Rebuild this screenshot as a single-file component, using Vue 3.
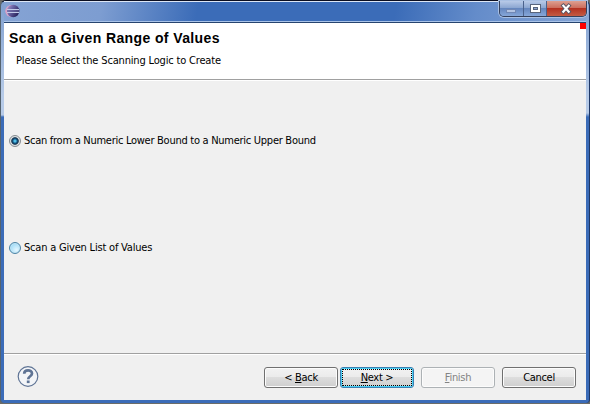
<script setup>
import { ref } from 'vue'

const options = ['Scan from a Numeric Lower Bound to a Numeric Upper Bound', 'Scan a Given List of Values']
const selected = ref(0)
const buttons = [
  { before: '< ', key: 'B', after: 'ack', kind: 'back' },
  { before: '', key: 'N', after: 'ext >', kind: 'next' },
  { before: '', key: 'F', after: 'inish', kind: 'finish', disabled: true },
  { before: 'Cancel', key: '', after: '', kind: 'cancel' },
]
</script>

<template>
  <div class="window">
    <div class="titlebar">
      <svg class="logo" width="15" height="14" viewBox="0 0 15 14">
        <defs>
          <linearGradient id="orb" x1="0" y1="0" x2="1" y2=".6">
            <stop offset="0" stop-color="#b9a0d2" />
            <stop offset=".4" stop-color="#6e67a8" />
            <stop offset="1" stop-color="#28235c" />
          </linearGradient>
        </defs>
        <ellipse cx="6.5" cy="7" rx="6.3" ry="6" fill="#d9a3c8" />
        <circle cx="8.2" cy="7" r="6.2" fill="url(#orb)" />
        <path d="M2 5.5h12M2 8.5h12" stroke="#c2cbe8" />
        <path d="M2 7h12" stroke="#6a6aa2" />
      </svg>
      <div class="controls">
        <span class="min"><svg width="23" height="15"><rect x="6.5" y="8.5" width="9" height="3" fill="#b3c4e2" stroke="#7188b5" /></svg></span>
        <span class="max"><svg width="22" height="15"><rect x="6.5" y="3.5" width="10" height="8" fill="#fff" stroke="#59657c" /><rect x="9.5" y="6.5" width="4" height="2" fill="#8ba4cf" stroke="#59657c" /></svg></span>
        <span class="close"><svg width="39" height="15"><path d="M16.3 4.7l5.4 6M21.7 4.7l-5.4 6" stroke="#5c5866" stroke-width="4" stroke-linecap="square" /><path d="M16.3 4.7l5.4 6M21.7 4.7l-5.4 6" stroke="#fff" stroke-width="2.1" stroke-linecap="square" /></svg></span>
      </div>
    </div>
    <div class="content">
      <header>
        <h1>Scan a Given Range of Values</h1>
        <p>Please Select the Scanning Logic to Create</p>
        <i class="marker"></i>
      </header>
      <main>
        <div v-for="(option, i) in options" :key="option" class="option" @click="selected = i">
          <span class="radio" :class="{ checked: selected === i }"></span>
          <span class="label" :class="'label-' + i">{{ option }}</span>
        </div>
      </main>
      <footer>
        <svg class="help" width="22" height="22" viewBox="0 0 22 22">
          <circle cx="11" cy="10.5" r="9.8" fill="#f3f5f8" stroke="#5f7495" stroke-width="1.2" />
          <path d="M7.2 7.8C7.2 3.3 15 3.3 15 7.6C15 10.4 11.2 10.1 11.2 13.2" fill="none" stroke="#5f7495" stroke-width="2.7" />
          <rect x="9.8" y="14.5" width="2.8" height="2.6" fill="#5f7495" />
        </svg>
        <div class="buttons">
          <button v-for="b in buttons" :key="b.kind" :class="b.kind" :disabled="b.disabled"><span class="text">{{ b.before }}<u>{{ b.key }}</u>{{ b.after }}</span></button>
        </div>
      </footer>
    </div>
  </div>
</template>

<style>
body { margin: 0; background: #6c6c68; overflow: hidden; }
</style>

<style scoped>
.window {
  box-sizing: border-box; width: 590px; height: 403px; padding: 0 3px 3px 3px;
  display: flex; flex-direction: column; border-top: 1px solid #0b0e20;
  border-left: 1px solid #55636f; border-right: 1px solid #1f3866;
  border-radius: 6px 6px 4px 4px;
  background:
    linear-gradient(#7f9fd0, #b7cbe8 94px, #b7cbe8 114px, transparent 116px) left / 3px 100% no-repeat,
    linear-gradient(#7f9fd0, #b7cbe8 94px, #b7cbe8 112px, transparent 116px) right / 3px 100% no-repeat,
    linear-gradient(100deg, #85a3d4, #7d9dd1 100px, #3b6cb8 195px, #3b6cb8 390px, #648cca 470px, #86a5d5) top / 100% 22px no-repeat,
    #3b6cb8;
  font: 11px/14px "DejaVu Sans Condensed", "DejaVu Sans", sans-serif; font-stretch: condensed; color: #000;
}
.titlebar {
  height: 21px; flex: none; box-sizing: border-box; display: flex; justify-content: space-between;
  border-top: 1px solid #dce6f5; border-bottom: 1px solid #a9c3e8;
}
.logo { margin: 2px 0 0 1px; }
.controls {
  display: flex; height: 15px; margin-right: -1px; margin-top: -1px; border: 1px solid #35415c; border-top: 0;
  border-radius: 0 0 5px 5px; overflow: hidden; box-shadow: 0 0 0 1px #a9c0e3;
}
.controls span { height: 15px; }
.controls svg { display: block; }
.min, .max { background: linear-gradient(#b8cae8, #8aa5d0 47%, #6687be 50%, #86a7d9); border-right: 1px solid #4b628c; }
.close { background: linear-gradient(#dda091, #cc6c5b 47%, #b43221 50%, #c45c43); }
.content {
  flex: 1; display: flex; flex-direction: column; background: #f0f0f0; box-sizing: border-box;
}
header {
  position: relative; height: 58px; box-sizing: border-box; flex: none; padding: 7px 5px 0;
  background: #fff; border-top: 1px solid #26446f; border-bottom: 1px solid #a0a0a0;
}
h1 { margin: 0; font: bold 14px/16px "Liberation Sans", sans-serif; letter-spacing: .39px; white-space: nowrap; }
p { margin: 8px 0 0 7px; white-space: nowrap; letter-spacing: -.17px; }
.marker { position: absolute; top: 0; right: 0; width: 6px; height: 6px; background: #f00; }
main {
  flex: 1; box-sizing: border-box; padding: 53px 5px 0; border-top: 1px solid #fff; border-bottom: 1px solid #a0a0a0;
  display: flex; flex-direction: column; gap: 93px;
}
.option { display: flex; align-items: center; height: 14px; gap: 3px; white-space: nowrap; }
.label-0 { letter-spacing: -.27px; }
.label-1 { letter-spacing: -.2px; }
.radio {
  box-sizing: border-box; width: 12px; height: 12px; flex: none; border: 1px solid #4b83a5; border-radius: 50%;
  background: radial-gradient(circle at 65% 70%, #e5f7ff, #a3dcf7 70%); box-shadow: inset 0 0 0 1px #c4e6f5;
}
.radio.checked {
  border-color: #858b90; background: radial-gradient(circle, #50bfe7 0 1px, #17608f 2px, #102d48 3.3px, #dce0e2 4.2px);
  box-shadow: none;
}
footer {
  height: 46px; flex: none; box-sizing: border-box; border-top: 1px solid #fff; display: flex;
  justify-content: space-between; align-items: flex-start; padding: 11px 10px 0 13px;
}
.buttons { display: flex; padding-top: 1px; }
button {
  box-sizing: border-box; width: 74px; height: 21px; margin: 0 0 0 7px; padding: 0; font: inherit; color: #000;
  letter-spacing: -.3px;
  border: 1px solid #707070; border-radius: 3px; box-shadow: inset 0 0 0 1px #fcfcfc;
  background: linear-gradient(#f2f2f2, #ebebeb 48%, #dddddd 50%, #cfcfcf);
}
.next { margin-left: 2px; border-color: #3c7fb1; box-shadow: inset 0 0 0 1px #48d0f5; position: relative; }
.next::after { content: ""; position: absolute; inset: 1px; border: 1px dotted #000; }
button:disabled { color: #838383; border-color: #adb2b5; background: #f4f4f4; }
</style>
